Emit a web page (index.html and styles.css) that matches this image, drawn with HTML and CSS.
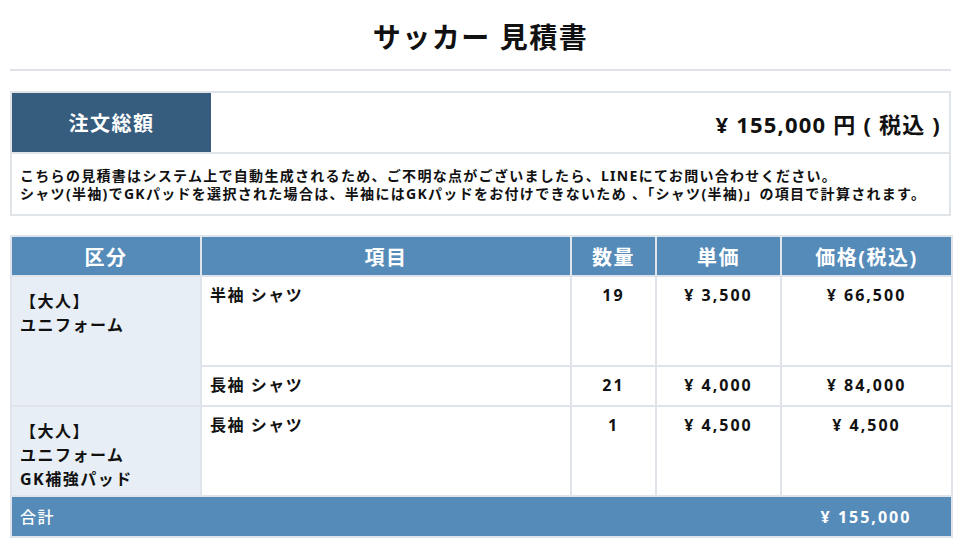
FILE: index.html
```html
<!DOCTYPE html>
<html lang="ja">
<head>
<meta charset="utf-8">
<title>サッカー 見積書</title>
<link rel="stylesheet" href="styles.css">
</head>
<body>
<div class="page">
  <h1 class="title">サッカー 見積書</h1>

  <section class="summary">
    <div class="summary-row">
      <div class="summary-label">注文総額</div>
      <div class="summary-value">¥ 155,000 円 ( 税込 )</div>
    </div>
    <div class="summary-note">
      <p>こちらの見積書はシステム上で自動生成されるため、ご不明な点がございましたら、LINEにてお問い合わせください。</p>
      <p>シャツ(半袖)でGKパッドを選択された場合は、半袖にはGKパッドをお付けできないため 、「シャツ(半袖)」の項目で計算されます。</p>
    </div>
  </section>

  <table class="quote">
    <colgroup>
      <col class="c-cat">
      <col class="c-item">
      <col class="c-qty">
      <col class="c-unit">
      <col class="c-price">
    </colgroup>
    <thead>
      <tr class="head">
        <th>区分</th>
        <th>項目</th>
        <th>数量</th>
        <th>単価</th>
        <th>価格(税込)</th>
      </tr>
    </thead>
    <tbody>
      <tr class="row-tall">
        <td class="cat" rowspan="2">【大人】<br>ユニフォーム</td>
        <td class="item">半袖 シャツ</td>
        <td class="num">19</td>
        <td class="num">¥ 3,500</td>
        <td class="num">¥ 66,500</td>
      </tr>
      <tr class="row-short">
        <td class="item">長袖 シャツ</td>
        <td class="num">21</td>
        <td class="num">¥ 4,000</td>
        <td class="num">¥ 84,000</td>
      </tr>
      <tr class="row-tall">
        <td class="cat">【大人】<br>ユニフォーム<br>GK補強パッド</td>
        <td class="item">長袖 シャツ</td>
        <td class="num">1</td>
        <td class="num">¥ 4,500</td>
        <td class="num">¥ 4,500</td>
      </tr>
    </tbody>
    <tfoot>
      <tr class="total">
        <td class="total-label" colspan="4">合計</td>
        <td class="total-value">¥ 155,000</td>
      </tr>
    </tfoot>
  </table>
</div>
</body>
</html>
```

FILE: styles.css
```css
* { box-sizing: border-box; }

html, body {
  margin: 0;
  padding: 0;
  background: #ffffff;
}

body {
  font-family: "Noto Sans", "Noto Sans CJK JP", sans-serif;
  color: #111111;
  letter-spacing: 1.5px;
}

.page {
  padding: 0 10px;
}

.title {
  margin: 0;
  padding: 17px 0 12px;
  line-height: 40px;
  height: 71px;
  font-size: 28px;
  font-weight: 700;
  text-align: center;
  color: #111111;
  border-bottom: 2px solid #dfe3e8;
}

.summary {
  margin-top: 20px;
  border: 2px solid #dfe4e9;
}

.summary-row {
  display: flex;
  height: 59px;
}

.summary-label {
  width: 199px;
  background: #365c7e;
  color: #ffffff;
  font-size: 20px;
  font-weight: 700;
  display: flex;
  align-items: center;
  justify-content: center;
}

.summary-value {
  flex: 1;
  display: flex;
  align-items: center;
  justify-content: flex-end;
  padding-right: 8px;
  font-size: 22px;
  font-weight: 700;
  letter-spacing: 1.2px;
}

.summary-note {
  border-top: 2px solid #dfe4e9;
  padding: 13px 8px 12px;
  font-size: 14px;
  font-weight: 700;
  line-height: 17.5px;
  letter-spacing: 1.3px;
}

.summary-note p {
  margin: 0;
  white-space: nowrap;
}

.quote {
  margin-top: 19px;
  width: 100%;
  border-collapse: collapse;
  table-layout: fixed;
  border: 2px solid #dfe4ea;
}

.c-cat { width: 190px; }
.c-item { width: 370px; }
.c-qty { width: 85px; }
.c-unit { width: 125px; }
.c-price { width: 171px; }

.quote th,
.quote td {
  border: 2px solid #dfe4ea;
  padding: 0;
}

.head {
  height: 40px;
}

.head th {
  background: #558bb9;
  color: #ffffff;
  font-size: 20px;
  font-weight: 700;
  text-align: center;
  vertical-align: middle;
}

.row-tall { height: 90px; }
.row-short { height: 40px; }

.quote td {
  vertical-align: top;
  font-size: 16px;
  font-weight: 700;
  line-height: 24px;
}

.cat {
  background: #e7eef5;
  padding: 12px 8px 0 !important;
}

.item {
  padding: 6px 8px 0 !important;
}

.num {
  text-align: center;
  padding-top: 6px !important;
  letter-spacing: 2px;
}

.total {
  height: 41px;
}

.quote .total td {
  background: #558bb9;
  color: #ffffff;
  vertical-align: middle;
  border-left: none;
  border-right: none;
}

.quote .total .total-label {
  padding-left: 8px;
  font-weight: 500;
  border-left: 2px solid #dfe4ea;
}

.quote .total .total-value {
  text-align: center;
  letter-spacing: 2px;
  border-right: 2px solid #dfe4ea;
}
```
